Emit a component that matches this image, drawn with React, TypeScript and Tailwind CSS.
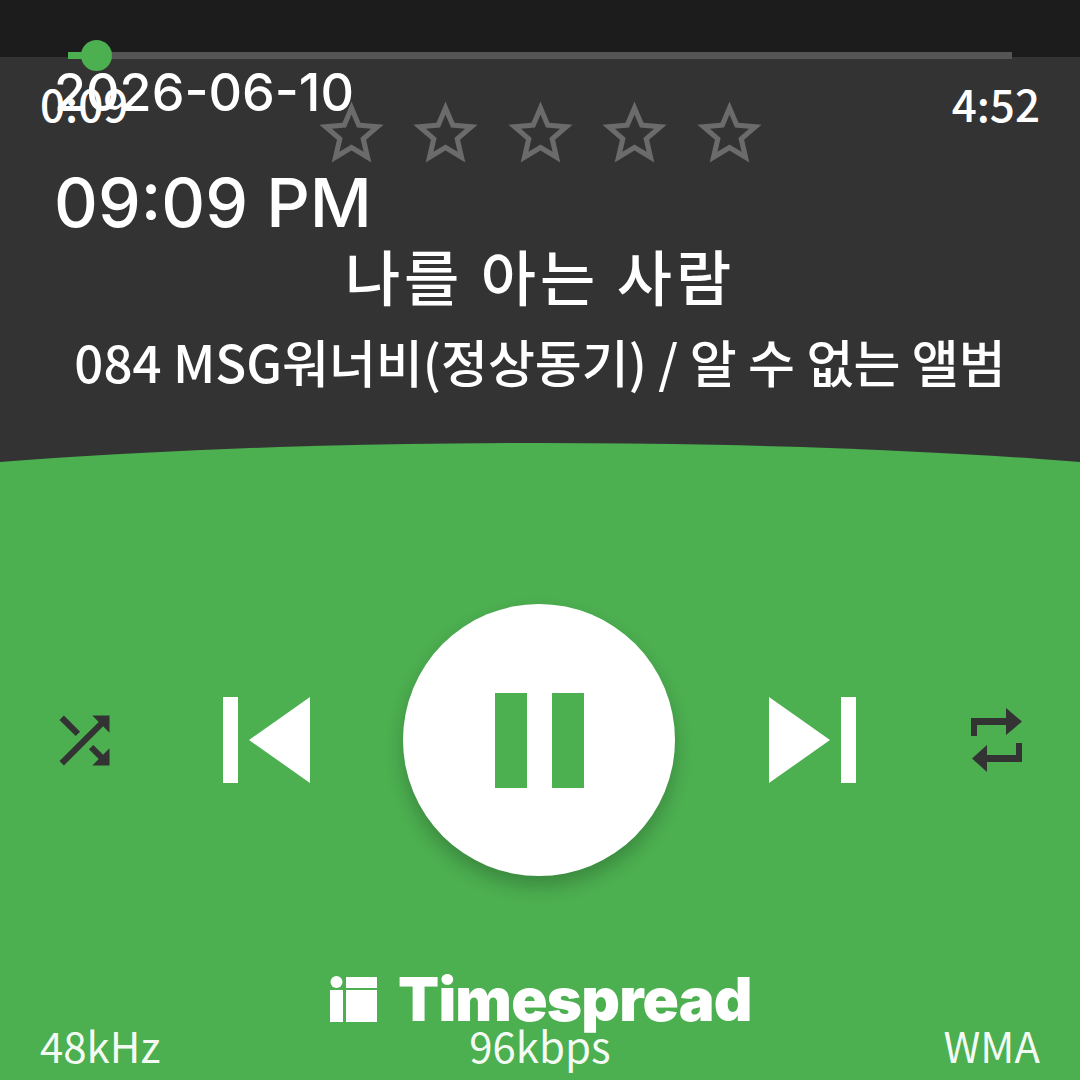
import React from 'react';

const handFont = "font-['Noto_Sans_CJK_KR','Noto_Sans',sans-serif]";

const Star = () => (
  <svg viewBox="0 0 24 24" className="w-[77px] h-[77px] fill-[#6b6b6b]">
    <path d="M22 9.24l-7.19-.62L12 2 9.19 8.63 2 9.24l5.46 4.73L5.82 21 12 17.27 18.18 21l-1.63-7.03L22 9.24zM12 15.4l-3.76 2.27 1-4.28-3.32-2.88 4.38-.38L12 6.1l1.71 4.04 4.38.38-3.32 2.88 1 4.28L12 15.4z" />
  </svg>
);

const SeekBar = () => (
  <div className="absolute left-[68px] top-[52px] w-[944px] h-[7px] bg-[#555555]">
    <div className="absolute left-0 top-0 h-full w-[20px] bg-[#4caf50]" />
    <div className="absolute left-[13px] top-[-12px] w-[31px] h-[31px] rounded-full bg-[#4caf50]" />
  </div>
);

const Logo = () => (
  <div className="absolute left-[330px] top-[964px] flex items-center gap-[21px]">
    <svg viewBox="0 0 47 46" className="w-[47px] h-[46px] fill-white">
      <circle cx="6.5" cy="6" r="6" />
      <rect x="0" y="14" width="13" height="32" />
      <rect x="16" y="1" width="31" height="11" />
      <rect x="16" y="14" width="31" height="32" />
    </svg>
    <span className="font-['Inter',sans-serif] font-black text-[60px] leading-[70px] tracking-[-0.8px] text-white">Timespread</span>
  </div>
);

export default function App() {
  return (
    <div className="relative w-[1080px] h-[1080px] overflow-hidden flex flex-col bg-[#333333] text-white">
      <div className="h-[57px] shrink-0 bg-[#1c1c1c]" />

      <div className={`flex flex-col items-center font-medium ${handFont}`}>
        <div className="w-full flex justify-between items-start px-[40px] mt-[21px] text-[44px] leading-[50px]">
          <span>0:09</span>
          <span>4:52</span>
        </div>
        <div className="flex gap-[17.5px] -mt-[33px]">
          <Star />
          <Star />
          <Star />
          <Star />
          <Star />
        </div>
        <div className="mt-[63px] text-[60px] leading-[80px] tracking-[4px]">나를 아는 사람</div>
        <div className="mt-[16px] text-[51px] leading-[60px] whitespace-nowrap">084 MSG워너비(정상동기) / 알 수 없는 앨범</div>
      </div>

      <div className="absolute left-0 top-[443px] w-full h-[637px]">
        <div className="absolute left-[-360px] top-0 w-[1800px] h-[190px] rounded-[50%] bg-[#4caf50]" />
        <div className="absolute left-0 top-[95px] w-full bottom-0 bg-[#4caf50]" />
        <div className="relative h-full flex flex-col">
          <div className="flex items-center mt-[161px] h-[272px] pl-[47px]">
            <svg viewBox="0 0 24 24" className="w-[75px] h-[75px] fill-[#333333]">
              <path d="M10.59 9.17L5.41 4 4 5.41l5.17 5.17 1.42-1.41zM14.5 4l2.04 2.04L4 18.59 5.41 20 17.96 7.46 20 9.5V4h-5.5zm.33 9.41l-1.41 1.41 3.13 3.13L14.5 20H20v-5.5l-2.04 2.04-3.13-3.13z" />
            </svg>
            <svg viewBox="0 0 87 86" className="ml-[101px] w-[87px] h-[86px] fill-white">
              <rect x="0" y="0" width="15" height="86" />
              <polygon points="26,43 87,0 87,86" />
            </svg>
            <div className="ml-[93px] w-[272px] h-[272px] rounded-full bg-white shadow-[0_10px_18px_rgba(0,0,0,0.22)] flex items-center justify-center gap-[25px]">
              <div className="w-[32px] h-[95px] bg-[#4caf50]" />
              <div className="w-[32px] h-[95px] bg-[#4caf50]" />
            </div>
            <svg viewBox="0 0 87 86" className="ml-[94px] w-[87px] h-[86px] fill-white">
              <polygon points="0,0 61,43 0,86" />
              <rect x="72" y="0" width="15" height="86" />
            </svg>
            <svg viewBox="0 0 51 64" className="ml-[115px] w-[51px] h-[64px] fill-[#333333]">
              <path d="M0 10H35V0L51 13.5 35 27V17H6V28H0Z" />
              <path d="M51 35V54H16V64L1 50.5 16 37V47H45V35Z" />
            </svg>
          </div>
          <div className={`mt-auto grid grid-cols-3 items-start px-[40px] pb-[10px] text-[42px] leading-[50px] text-white/95 ${handFont}`}>
            <span>48kHz</span>
            <span className="text-center">96kbps</span>
            <span className="text-right">WMA</span>
          </div>
        </div>
      </div>

      <SeekBar />

      <div className="absolute left-[54px] top-[62px] font-['Inter',sans-serif] font-medium text-white">
        <div className="text-[52px] leading-[62px]">2026-06-10</div>
        <div className="mt-[38px] text-[68px] leading-[80px]">09:09 PM</div>
      </div>

      <Logo />
    </div>
  );
}
